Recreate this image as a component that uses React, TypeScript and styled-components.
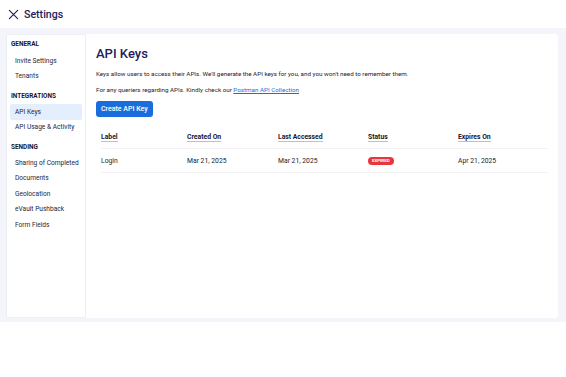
import React from 'react'
import styled, { createGlobalStyle } from 'styled-components'

const GlobalStyle = createGlobalStyle`
  html, body {
    margin: 0;
    padding: 0;
    background: #ffffff;
    font-family: Roboto, Inter, "Noto Sans", sans-serif;
  }
`

const Page = styled.div`
  width: 566px;
  height: 377px;
  display: flex;
  flex-direction: column;
  background: #ffffff;
`

const TopBar = styled.header`
  height: 28px;
  display: flex;
  align-items: center;
  gap: 5px;
  padding: 0 8px;
  color: #22205e;
  font-size: 10.6px;
  font-weight: 500;
`

const CloseIcon = styled.svg`
  width: 11px;
  height: 11px;
`

const Body = styled.div`
  height: 294px;
  box-sizing: border-box;
  background: #f4f5fb;
  padding: 6px 8px 4px 6px;
  display: flex;
`

const Sidebar = styled.nav`
  width: 80px;
  background: #ffffff;
  border: 1px solid #eceef4;
  box-sizing: border-box;
  border-radius: 2px 0 0 2px;
  padding: 4px 3px 0 3px;
  display: flex;
  flex-direction: column;
`

const SectionTitle = styled.div`
  font-size: 6.4px;
  font-weight: 700;
  color: #16162e;
  height: 10px;
  margin: 7px 0 3px 0;
  padding-left: 1px;
  display: flex;
  align-items: center;
  &:first-child { margin-top: 0; margin-bottom: 4px; }
`

const NavItem = styled.div<{ $active?: boolean }>`
  font-size: 6.6px;
  color: #262638;
  padding: 0 5px;
  height: 15.5px;
  display: flex;
  align-items: center;
  border-radius: 2px;
  background: ${(p) => (p.$active ? '#e3effd' : 'transparent')};
  white-space: nowrap;
`

const Main = styled.main`
  flex: 1;
  background: #ffffff;
  border-radius: 0 4px 4px 0;
  padding: 12px 10px 0 10px;
  box-sizing: border-box;
`

const Title = styled.h1`
  margin: 0;
  font-size: 13px;
  font-weight: 500;
  color: #22205e;
  line-height: 16px;
`

const Text = styled.p`
  margin: 0;
  font-size: 6.25px;
  color: #222230;
  line-height: 8px;
`

const Intro = styled.div`
  margin-top: 8px;
  display: flex;
  flex-direction: column;
  gap: 8px;
`

const Link = styled.a`
  color: #1b6fd8;
  text-decoration: underline;
`

const PrimaryButton = styled.button`
  margin-top: 7px;
  height: 16px;
  padding: 0 5px;
  border: none;
  border-radius: 3px;
  background: #1a6edc;
  color: #ffffff;
  font-family: inherit;
  font-size: 7px;
  font-weight: 500;
`

const Table = styled.div`
  margin-top: 10px;
  width: 447px;
  padding-left: 5px;
`

const Row = styled.div<{ $head?: boolean }>`
  display: grid;
  grid-template-columns: 86px 91px 90px 90px 1fr;
  align-items: center;
  height: ${(p) => (p.$head ? '21px' : '23px')};
  border-bottom: 1px solid #f3f3f6;
  font-size: ${(p) => (p.$head ? '6.8px' : '6.8px')};
  font-weight: ${(p) => (p.$head ? 700 : 400)};
  color: ${(p) => (p.$head ? '#16162e' : '#222230')};
`

const HeadLabel = styled.span`
  justify-self: start;
  border-bottom: 1px solid #a8c3ee;
  line-height: 8px;
`

const Badge = styled.span`
  justify-self: start;
  background: #e8363d;
  color: #ffffff;
  font-size: 4.4px;
  font-weight: 700;
  padding: 0 4px;
  height: 8px;
  line-height: 8px;
  border-radius: 5px;
`

const headers = ['Label', 'Created On', 'Last Accessed', 'Status', 'Expires On']

export default function App() {
  return (
    <>
      <GlobalStyle />
      <Page>
        <TopBar>
          <CloseIcon viewBox="0 0 12 12" fill="none" stroke="#22205e" strokeWidth="1.3" strokeLinecap="round">
            <path d="M1.5 1.5 L10.5 10.5 M10.5 1.5 L1.5 10.5" />
          </CloseIcon>
          Settings
        </TopBar>
        <Body>
          <Sidebar>
            <SectionTitle>GENERAL</SectionTitle>
            <NavItem>Invite Settings</NavItem>
            <NavItem>Tenants</NavItem>
            <SectionTitle>INTEGRATIONS</SectionTitle>
            <NavItem $active>API Keys</NavItem>
            <NavItem>API Usage &amp; Activity</NavItem>
            <SectionTitle>SENDING</SectionTitle>
            <NavItem>Sharing of Completed</NavItem>
            <NavItem>Documents</NavItem>
            <NavItem>Geolocation</NavItem>
            <NavItem>eVault Pushback</NavItem>
            <NavItem>Form Fields</NavItem>
          </Sidebar>
          <Main>
            <Title>API Keys</Title>
            <Intro>
              <Text>
                Keys allow users to access their APIs. We'll generate the API keys for you, and you won't need to remember them.
              </Text>
              <Text>
                For any queriers regarding APIs. Kindly check our <Link>Postman API Collection</Link>
              </Text>
            </Intro>
            <PrimaryButton>Create API Key</PrimaryButton>
            <Table>
              <Row $head>
                {headers.map((h) => (
                  <HeadLabel key={h}>{h}</HeadLabel>
                ))}
              </Row>
              <Row>
                <span>Login</span>
                <span>Mar 21, 2025</span>
                <span>Mar 21, 2025</span>
                <Badge>EXPIRED</Badge>
                <span>Apr 21, 2025</span>
              </Row>
            </Table>
          </Main>
        </Body>
      </Page>
    </>
  )
}
